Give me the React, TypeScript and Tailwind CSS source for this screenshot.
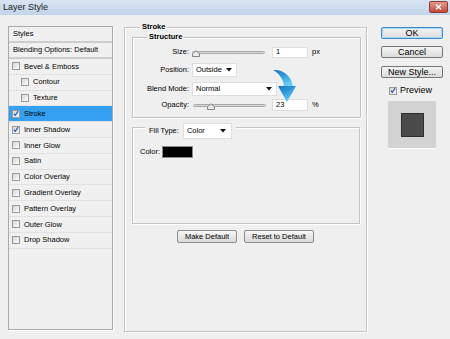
import React from "react"

const effects = [
  { label: "Bevel & Emboss" },
  { label: "Contour", indent: true },
  { label: "Texture", indent: true },
  { label: "Stroke", checked: true, selected: true },
  { label: "Inner Shadow", checked: true },
  { label: "Inner Glow" },
  { label: "Satin" },
  { label: "Color Overlay" },
  { label: "Gradient Overlay" },
  { label: "Pattern Overlay" },
  { label: "Outer Glow" },
  { label: "Drop Shadow" },
]

function CheckBox({ checked }: { checked?: boolean }) {
  return (
    <div className="w-[8px] h-[8px] shrink-0 border border-[#9a9a9a] bg-gradient-to-br from-[#d8d8d8] to-[#fbfbfb] flex items-center justify-center">
      {checked && (
        <svg width="7" height="7" viewBox="0 0 7 7">
          <path d="M1 3.6 L2.7 5.6 L6 0.8" fill="none" stroke="#2b4fae" strokeWidth="1.3" />
        </svg>
      )}
    </div>
  )
}

function Arrow() {
  return (
    <svg width="6" height="4" viewBox="0 0 6 4" className="shrink-0">
      <path d="M0 0 H6 L3 3.5 Z" fill="#111" />
    </svg>
  )
}

function Select({ value, width }: { value: string; width: string }) {
  return (
    <div className={`${width} h-[14px] bg-white border border-[#dedede] flex items-center justify-between pl-[3px] pr-[4px]`}>
      <span>{value}</span>
      <Arrow />
    </div>
  )
}

function Slider({ pos }: { pos: number }) {
  return (
    <div className="relative w-[73px] h-[12px] flex items-center">
      <div className="w-full h-[3px] rounded-full border border-[#a8a8a8] bg-gradient-to-b from-[#bdbdbd] to-[#f2f2f2]" />
      <svg width="8" height="7" viewBox="0 0 8 7" className="absolute top-[4px]" style={{ left: pos }}>
        <path d="M0.5 6.5 V4 L4 0.7 L7.5 4 V6.5 Z" fill="#ececec" stroke="#777" strokeWidth="0.9" />
      </svg>
    </div>
  )
}

export default function App() {
  return (
    <div className="relative w-[450px] h-[339px] overflow-hidden bg-[#efefef] text-black text-[7.5px] leading-none font-['Liberation_Sans',Arial,sans-serif]">
      {/* title bar */}
      <div className="h-[15px] flex items-center justify-between pl-[3px] pr-[2px] bg-gradient-to-b from-[#d8e4f2] to-[#c2d4ea]">
        <span className="text-[9px] text-[#1a1a1a]">Layer Style</span>
        <div className="w-[19px] h-[12px] mt-[-1px] rounded-[2px] border border-[#8a3a32] bg-gradient-to-b from-[#e59a8e] to-[#c4473a] flex items-center justify-center">
          <svg width="7" height="6" viewBox="0 0 7 6">
            <path d="M1 0.8 L6 5.2 M6 0.8 L1 5.2" stroke="#fff" strokeWidth="1.5" />
          </svg>
        </div>
      </div>

      <div className="flex pl-[8px] pt-[11px]">
        {/* styles list */}
        <div className="w-[105px] h-[304px] border border-[#a9a9a9] shadow-[1px_1px_0_#fff] bg-[#f0f0f0]">
          <div className="h-[16px] pl-[4px] flex items-center border-b-2 border-[#cdcdcd]">Styles</div>
          <div className="h-[16px] pl-[4px] flex items-center border-b-2 border-[#cdcdcd]">Blending Options: Default</div>
          {effects.map((e) => (
            <div
              key={e.label}
              className={`h-[15.8px] flex items-center gap-[4px] border-b border-[#e2e2e2] ${e.indent ? "pl-[12px]" : "pl-[3px]"} ${e.selected ? "bg-[#35a0f2]" : ""}`}
            >
              <CheckBox checked={e.checked} />
              <span>{e.label}</span>
            </div>
          ))}
        </div>

        {/* stroke settings */}
        <div className="relative ml-[11px] mt-[1px] w-[243px] h-[305px] border border-[#c4c4c4] shadow-[inset_1px_1px_0_#fff,1px_1px_0_#fff] flex flex-col">
          <span className="absolute -top-[5px] left-[15px] px-[2px] bg-[#efefef] font-bold">Stroke</span>

          <div className="relative ml-[7px] mr-[5px] mt-[9px] h-[81px] border border-[#c4c4c4] shadow-[inset_1px_1px_0_#fff,1px_1px_0_#fff] flex flex-col">
            <span className="absolute -top-[5px] left-[14px] px-[2px] bg-[#efefef] font-bold">Structure</span>

            <div className="mt-[7px] h-[14px] flex items-center">
              <span className="w-[56px] text-right">Size:</span>
              <div className="ml-[3px]"><Slider pos={0} /></div>
              <div className="ml-[7px] w-[36px] h-[11px] bg-white border border-[#dedede] flex items-center pl-[3px]">1</div>
              <span className="ml-[4px]">px</span>
            </div>
            <div className="mt-[4px] h-[14px] flex items-center">
              <span className="w-[56px] text-right">Position:</span>
              <div className="ml-[3px]"><Select value="Outside" width="w-[45px]" /></div>
            </div>
            <div className="mt-[5px] h-[14px] flex items-center">
              <span className="w-[56px] text-right">Blend Mode:</span>
              <div className="ml-[3px]"><Select value="Normal" width="w-[85px]" /></div>
            </div>
            <div className="mt-[2px] h-[14px] flex items-center">
              <span className="w-[56px] text-right">Opacity:</span>
              <div className="ml-[4px]"><Slider pos={14} /></div>
              <div className="ml-[6px] w-[36px] h-[12px] bg-white border border-[#dedede] flex items-center pl-[3px]">23</div>
              <span className="ml-[4px]">%</span>
            </div>
          </div>

          <div className="relative ml-[7px] mr-[6px] mt-[9px] h-[97px] border border-[#c4c4c4] shadow-[inset_1px_1px_0_#fff,1px_1px_0_#fff]">
            <div className="absolute -top-[5px] left-[12px] px-[4px] bg-[#efefef] flex items-center gap-[4px]">
              <span>Fill Type:</span>
              <div className="w-[49px] h-[16px] bg-white border border-[#dedede] flex items-center justify-between pl-[3px] pr-[5px]">
                <span>Color</span>
                <Arrow />
              </div>
            </div>
            <div className="mt-[18px] pl-[7px] flex items-center gap-[2px]">
              <span>Color:</span>
              <div className="w-[31px] h-[12px] bg-black border border-[#8a8a8a]" />
            </div>
          </div>

          <div className="mt-[6px] flex justify-center gap-[7px]">
            <button className="w-[60px] h-[13px] rounded-[2px] border border-[#8c8c8c] bg-gradient-to-b from-[#f6f6f6] to-[#dadada]">Make Default</button>
            <button className="w-[70px] h-[13px] rounded-[2px] border border-[#8c8c8c] bg-gradient-to-b from-[#f6f6f6] to-[#dadada]">Reset to Default</button>
          </div>
        </div>

        {/* buttons + preview */}
        <div className="ml-[14px] mt-[1px] w-[62px] flex flex-col text-[9px]">
          <button className="h-[12px] rounded-[2px] border border-[#3c8ccf] shadow-[inset_0_0_0_1px_#a8d8f6] bg-gradient-to-b from-[#f4f4f4] to-[#dcdcdc]">OK</button>
          <button className="mt-[7px] h-[12px] rounded-[2px] border border-[#777] bg-gradient-to-b from-[#f4f4f4] to-[#dcdcdc]">Cancel</button>
          <button className="mt-[8px] h-[12px] rounded-[2px] border border-[#777] bg-gradient-to-b from-[#f4f4f4] to-[#dcdcdc]">New Style...</button>
          <div className="mt-[8px] ml-[8px] flex items-center gap-[3px]">
            <CheckBox checked />
            <span>Preview</span>
          </div>
          <div className="mt-[6px] ml-[7px] w-[48px] h-[47px] bg-[#d3d3d3] shadow-[0_1px_0_#fff] flex items-center justify-center">
            <div className="w-[23px] h-[24px] bg-[#4b4b4b] border border-[#2e2e2e]" />
          </div>
        </div>
      </div>

      {/* blue annotation arrow */}
      <svg width="36" height="40" viewBox="0 0 36 40" className="absolute left-[265px] top-[66px]">
        <defs>
          <linearGradient id="ar" x1="0" y1="0" x2="0.6" y2="1">
            <stop offset="0" stopColor="#1b6fb3" />
            <stop offset="0.5" stopColor="#2f9ee0" />
            <stop offset="1" stopColor="#6fd0f5" />
          </linearGradient>
        </defs>
        <path d="M8 4 C18 3, 27 10, 28 21 L19 21 C19 14, 15 8, 8 4 Z" fill="url(#ar)" />
        <path d="M13 20 L31 20 L22 36 Z" fill="url(#ar)" />
      </svg>
    </div>
  )
}
